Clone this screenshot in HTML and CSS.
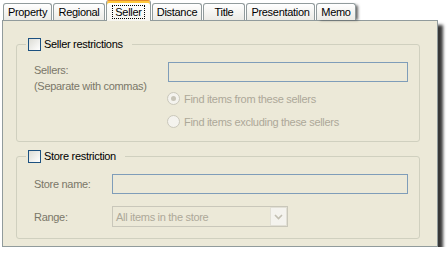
FILE: index.html
```html
<!DOCTYPE html>
<html lang="en">
    <head>
        <meta charset="UTF-8" />
        <title>Search options - Seller</title>

        <link rel="stylesheet" href="styles.css">
    </head>
    <body>
        <div class="dialog">
            <div class="tabs">
                <div class="tab tab-property">Property</div>
                <div class="tab tab-regional">Regional</div>
                <div class="tab tab-seller selected"><span class="focus">Seller</span></div>
                <div class="tab tab-distance">Distance</div>
                <div class="tab tab-title">Title</div>
                <div class="tab tab-presentation">Presentation</div>
                <div class="tab tab-memo">Memo</div>
            </div>

            <div class="panel">
                <fieldset class="group">
                    <legend><span class="check"></span>Seller restrictions</legend>
                    <div class="rows sellers">
                        <div class="label label-sellers">Sellers:<br>(Separate with commas)</div>
                        <div class="field sellers-field"></div>
                        <div class="options">
                            <div class="option"><span class="radio on"></span>Find items from these sellers</div>
                            <div class="option"><span class="radio"></span>Find items excluding these sellers</div>
                        </div>
                    </div>
                </fieldset>

                <fieldset class="group group-store">
                    <legend><span class="check"></span>Store restriction</legend>
                    <div class="rows store">
                        <div class="label">Store name:</div>
                        <div class="field store-field"></div>
                        <div class="label">Range:</div>
                        <div class="select">
                            <span class="select-text">All items in the store</span>
                            <span class="select-button">
                                <svg width="9" height="6" viewBox="0 0 9 6"><path d="M1 1 L4.5 4.5 L8 1" fill="none" stroke="#c2bfb2" stroke-width="1.6"/></svg>
                            </span>
                        </div>
                    </div>
                </fieldset>
            </div>
        </div>
    </body>
</html>
```

FILE: styles.css
```css
body {
    margin: 0;
    background: #fff;
    font-family: "Liberation Sans", Arial, sans-serif;
    font-size: 11px;
    letter-spacing: -0.3px;
    color: #000;
}

.dialog {
    padding-left: 2px;
    width: 436px;
}

/* tab strip */
.tabs {
    display: flex;
    align-items: flex-end;
    gap: 1px;
    height: 20px;
    padding-left: 1px;
    position: relative;
    z-index: 1;
}

.tab {
    box-sizing: border-box;
    height: 17px;
    border: 1px solid #919b9c;
    border-bottom: 0;
    border-radius: 3px 3px 0 0;
    background: linear-gradient(#ffffff, #ecebe6);
    text-align: center;
    line-height: 16px;
}
.tab-property { width: 49px; }
.tab-regional { width: 52px; }
.tab-seller { width: 45px; }
.tab-distance { width: 50px; }
.tab-title { width: 42px; }
.tab-presentation { width: 69px; }
.tab-memo {
    width: 40px;
    box-shadow: 3px 1px 3px -1px rgba(0, 0, 0, 0.6);
}

.tab.selected {
    height: 21px;
    margin-bottom: -1px;
    border-top: 1px solid #e68b2c;
    box-shadow: inset 0 2px 0 #ffc83c;
    background: linear-gradient(#ffffff, #f6f5f0);
    padding-top: 3px;
}
.focus {
    display: inline-block;
    line-height: 12px;
    padding: 0 2px;
    border: 1px dotted #000;
}

/* page */
.panel {
    box-sizing: border-box;
    width: 436px;
    border: 1px solid #919b9c;
    background: #ece9d8;
    padding: 17px 17px 7px 13px;
    box-shadow: 5px 5px 3px rgba(0, 0, 0, 0.78);
}

.group {
    margin: 0;
    padding: 0 0 8px 9px;
    border: 1px solid #d0d0bf;
    border-radius: 3px;
    min-width: 0;
}
.group-store {
    margin-top: 8px;
    padding-bottom: 11px;
}

.group legend {
    display: flex;
    align-items: center;
    height: 13px;
    line-height: 13px;
    padding: 0 9px 0 2px;
}

.check {
    box-sizing: border-box;
    width: 13px;
    height: 13px;
    margin-right: 3px;
    border: 1px solid #1c5180;
    background: linear-gradient(135deg, #dcdcd5, #ffffff);
}

.rows {
    display: grid;
    margin-top: 11px;
    padding-left: 8px;
}
.sellers {
    grid-template-columns: 134px 240px;
}
.store {
    grid-template-columns: 78px 296px;
    row-gap: 12px;
}

.label {
    color: #7a7768;
    line-height: 16px;
    align-self: center;
}
.label-sellers {
    grid-row: 1 / span 2;
    align-self: start;
}

.field {
    box-sizing: border-box;
    height: 20px;
    border: 1px solid #7f9db9;
    background: #ece9d8;
}

.options {
    grid-column: 2;
    margin-top: 5px;
}
.option {
    display: flex;
    align-items: center;
    height: 23px;
    color: #aca899;
}
.radio {
    box-sizing: border-box;
    width: 13px;
    height: 13px;
    margin-left: -1px;
    margin-right: 4px;
    border: 1px solid #cac8bb;
    border-radius: 50%;
    background: #f4f3ee;
    position: relative;
}
.radio.on::after {
    content: "";
    position: absolute;
    left: 3px;
    top: 3px;
    width: 5px;
    height: 5px;
    border-radius: 50%;
    background: #c8c5b8;
}

.select {
    box-sizing: border-box;
    display: flex;
    align-items: center;
    justify-content: space-between;
    width: 176px;
    height: 21px;
    border: 1px solid #c9c7ba;
    background: #ece9d8;
}
.select-text {
    padding-left: 3px;
    color: #aca899;
}
.select-button {
    box-sizing: border-box;
    display: flex;
    align-items: center;
    justify-content: center;
    width: 17px;
    height: 19px;
    border: 1px solid #e2e0d6;
    background: #f4f3ee;
}
```
